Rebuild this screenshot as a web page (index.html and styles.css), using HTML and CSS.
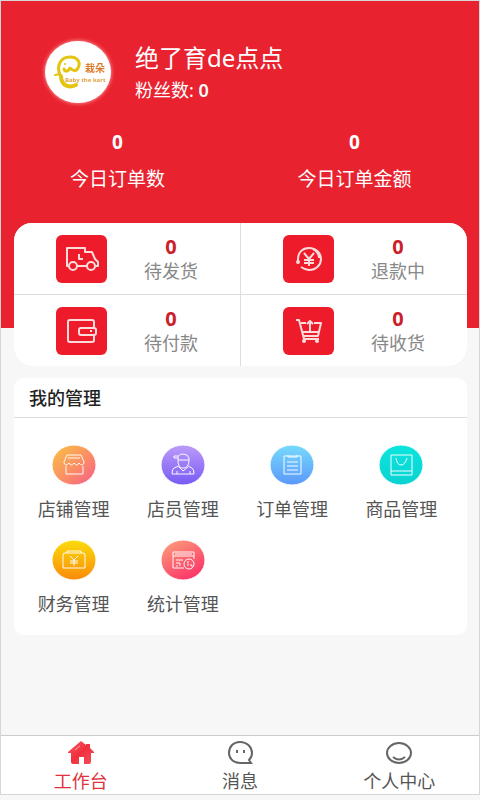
FILE: index.html
```html
<!DOCTYPE html>
<html lang="zh-CN">
<head>
<meta charset="utf-8">
<meta name="viewport" content="width=device-width, initial-scale=1">
<title>工作台</title>
<link rel="stylesheet" href="styles.css">
</head>
<body>
<div class="app">
  <header class="hero">
    <div class="profile">
      <svg class="avatar" viewBox="0 0 70 66" role="img" aria-label="店铺头像">
        <ellipse cx="35" cy="33" rx="33" ry="31" fill="#fff"/>
        <g fill="none" stroke="#e3c410" stroke-linecap="round" stroke-linejoin="round">
          <path stroke-width="2" d="M12 36l5-1"/>
          <path stroke-width="3" d="M17 36c-4-10 1-18 10-18 8 0 11 6 8 11-2 4-5 3-8 0-2 4-5 4-6 1"/>
          <path stroke-width="4" d="M18 37c0 8 6 13 15 9"/>
        </g>
        <circle cx="22" cy="25" r="1" fill="#e3c410"/>
        <text class="logo-name" x="42" y="33">栽朵</text>
        <text class="logo-sub" x="22" y="43">Baby the kart</text>
      </svg>
      <div>
        <h1 class="name">绝了育de点点</h1>
        <p class="fans">粉丝数: <b>0</b></p>
      </div>
    </div>
    <div class="today">
      <div><b>0</b><span>今日订单数</span></div>
      <div><b>0</b><span>今日订单金额</span></div>
    </div>
  </header>

  <main>
    <section class="orders">
      <a class="order" href="#ship">
        <svg class="tile" viewBox="0 0 51 48"><path d="M12 31h-1V13h18v4h7l3 7 3 3v4h-2M21 31h10M23 19v5h4"/><circle cx="17" cy="31" r="4"/><circle cx="35" cy="31" r="4"/></svg>
        <span class="count"><b>0</b>待发货</span>
      </a>
      <a class="order" href="#refund">
        <svg class="tile" viewBox="0 0 51 48"><path d="M15 24c0-7 5-11 11-11 7 0 12 5 12 11s-5 11-12 11c-3 0-5-1-8-3M30 14c4 2 6 5 6 9M21 18l5 6 5-6M26 24v7M21 25h10M21 28h10"/><path d="M15 24v4"/><circle cx="15" cy="27" r="1"/></svg>
        <span class="count"><b>0</b>退款中</span>
      </a>
      <a class="order" href="#pay">
        <svg class="tile" viewBox="0 0 51 48"><path d="M38 20v-5q0-2-2-2H14q-2 0-2 2v18q0 2 2 2h22q2 0 2-2v-4"/><rect x="23" y="21" width="17" height="7" rx="2"/><path d="M34 24h2"/></svg>
        <span class="count"><b>0</b>待付款</span>
      </a>
      <a class="order" href="#receive">
        <svg class="tile" viewBox="0 0 51 48"><path d="M13 13h3l5 19h15M18 16h5M31 16h7l-3 13H20M27 24v-9M24 17l3-3 3 3M20 25h16"/><circle cx="21" cy="34" r="1"/><circle cx="34" cy="34" r="1"/></svg>
        <span class="count"><b>0</b>待收货</span>
      </a>
    </section>

    <section class="manage">
      <h2>我的管理</h2>
      <div class="grid">
        <a href="#shop">
          <svg class="round" viewBox="0 0 44 42"><defs><linearGradient id="g1" x2="1" y2="1"><stop stop-color="#fbc342"/><stop offset=".55" stop-color="#fa8d65"/><stop offset="1" stop-color="#f75b8c"/></linearGradient></defs><ellipse cx="22" cy="21" rx="22" ry="20" fill="url(#g1)"/><path d="M15 11h14l3 7v1q-2 4-5 0-2 4-5 0-3 4-5 0-3 4-5 0v-1zM14 22v8h17v-8M16 14h12"/></svg>
          店铺管理</a>
        <a href="#staff">
          <svg class="round" viewBox="0 0 44 42"><defs><linearGradient id="g2" x2="0" y2="1"><stop stop-color="#bd9bfa"/><stop offset="1" stop-color="#775af4"/></linearGradient></defs><ellipse cx="22" cy="21" rx="22" ry="20" fill="url(#g2)"/><path d="M17 16v-2q0-4 5-4t6 4v2zM17 12h-4v2h4M17 16c0 6 2 8 5 8s6-2 6-8M18 22l-5 2q-2 1-2 6h22q0-5-2-6l-4-2M18 23l4 4 5-4M16 27v3M29 27v3"/></svg>
          店员管理</a>
        <a href="#orders">
          <svg class="round" viewBox="0 0 44 42"><defs><linearGradient id="g3" x2="0" y2="1"><stop stop-color="#76dafb"/><stop offset="1" stop-color="#5b98fb"/></linearGradient></defs><ellipse cx="22" cy="21" rx="22" ry="20" fill="url(#g3)"/><path d="M14 12h17v18H14zM18 11v2h9v-2M17 18h11M17 22h11M17 26h11"/></svg>
          订单管理</a>
        <a href="#goods">
          <svg class="round" viewBox="0 0 44 42"><defs><linearGradient id="g4" x2="0" y2="1"><stop stop-color="#0ce5dd"/><stop offset="1" stop-color="#0bd2d2"/></linearGradient></defs><ellipse cx="22" cy="21" rx="22" ry="20" fill="url(#g4)"/><path d="M12 11h21v20H12zM12 27h21M17 14q1 7 5 7t6-7"/></svg>
          商品管理</a>
        <a href="#finance">
          <svg class="round" viewBox="0 0 44 42"><defs><linearGradient id="g5" x2="0" y2="1"><stop stop-color="#fbdc0b"/><stop offset="1" stop-color="#fa8a0a"/></linearGradient></defs><ellipse cx="22" cy="21" rx="22" ry="20" fill="url(#g5)"/><path d="M13 14h18q2 0 2 2v13H11V16q0-2 2-2zM15 14v-2h14v2M18 17l4 4 4-4M22 21v6M18 22h8M18 24h8"/></svg>
          财务管理</a>
        <a href="#stats">
          <svg class="round" viewBox="0 0 44 42"><defs><linearGradient id="g6" x2=".6" y2="1"><stop stop-color="#fba57b"/><stop offset="1" stop-color="#fb3769"/></linearGradient></defs><ellipse cx="22" cy="21" rx="22" ry="20" fill="url(#g6)"/><path d="M23 29H12V13h21v7M12 17h21M14 15h17M15 21h7M15 24h4M15 27h2M19 24v3"/><circle cx="28" cy="25" r="5"/><path d="M27 22v5M30 25v2h2"/></svg>
          统计管理</a>
      </div>
    </section>
  </main>

  <nav class="tabs">
    <a class="active" href="#work">
      <svg viewBox="0 0 28 24"><defs><linearGradient id="g7" x2="1" y2="1"><stop stop-color="#fa5a62"/><stop offset=".5" stop-color="#f0303f"/><stop offset="1" stop-color="#f4505a"/></linearGradient></defs><path fill="url(#g7)" d="M14 0l5 4V3h4v4l4 4v1h-3v9q0 2-2 2h-5v-7h-5v7H6q-2 0-2-2v-9H1v-1z"/><path d="M8 9l5-4" stroke="#ffa4a4"/></svg>
      工作台</a>
    <a href="#message">
      <svg class="line" viewBox="0 0 28 24"><path d="M25 22H14C7 22 3 17 3 12 3 6 7 1 14 1s12 5 12 11c0 3-1 5-3 7zM11 9v3M18 9v3"/></svg>
      消息</a>
    <a href="#me">
      <svg class="line" viewBox="0 0 28 24"><ellipse cx="14" cy="12" rx="12" ry="10"/><path d="M8 16q6 5 12 0"/></svg>
      个人中心</a>
  </nav>
</div>
</body>
</html>
```
FILE: styles.css
```css
* { box-sizing: border-box; }

body {
  margin: 0;
  background: #f7f7f7;
  font-family: "Noto Sans", "Noto Sans CJK SC", sans-serif;
  font-size: 18px;
  line-height: 24px;
  color: #555;
}

h1, h2, p { margin: 0; }
a { color: inherit; text-decoration: none; }
svg { display: block; fill: none; }

.app {
  display: flex;
  flex-direction: column;
  min-height: calc(100vh - 5px);
  border: 1px solid #d6d6d6;
}

.hero {
  padding: 38px 0 136px;
  background: #e9222f;
  color: #fff;
}

.profile {
  display: flex;
  align-items: center;
  gap: 22px;
  padding-left: 42px;
}

.avatar {
  width: 70px;
  height: 66px;
  filter: drop-shadow(0 0 2px #ffb0b0);
}
.logo-name { font-size: 10px; font-weight: 700; fill: #dc7a2c; }
.logo-sub { font-size: 6px; font-weight: 700; fill: #e0a040; }

.name {
  font-size: 24px;
  font-weight: 400;
  line-height: 36px;
}
.fans { line-height: 28px; }
.fans b { font-weight: 600; }

.today {
  display: grid;
  grid-template-columns: 1fr 1fr;
  gap: 4px;
  margin-top: 25px;
  padding-right: 8px;
  text-align: center;
  font-size: 19px;
}
.today b, .today span { display: block; }
.today b { line-height: 24px; }
.today span { margin-top: 12px; line-height: 26px; }

main {
  flex: 1;
  margin: -105px 12px 0 13px;
}

.orders {
  display: grid;
  grid-template-columns: 1fr 1fr;
  gap: 1px;
  overflow: hidden;
  border-radius: 18px;
  background: #ddd;
}
.order {
  display: flex;
  align-items: center;
  gap: 37px;
  height: 71px;
  padding-left: 42px;
  background: #fff;
  color: #888;
}
.tile {
  width: 51px;
  height: 48px;
  border-radius: 6px;
  background: #ee1c2a;
  stroke: #ffdcdc;
  stroke-width: 2;
  stroke-linejoin: round;
}
.count { text-align: center; }
.count b {
  display: block;
  color: #cc1f2c;
  font-size: 20px;
}

.manage {
  margin-top: 12px;
  padding-bottom: 17px;
  border-radius: 10px;
  background: #fff;
}
.manage h2 {
  padding: 8px 15px 7px;
  border-bottom: 1px solid #ddd;
  color: #222;
  font-size: 18px;
  font-weight: 500;
}
.grid {
  display: grid;
  grid-template-columns: repeat(4, 1fr);
  row-gap: 16px;
  padding: 26px 11px 0 5px;
  text-align: center;
}
.round {
  width: 44px;
  height: 42px;
  margin: 0 auto 11px;
  stroke: #fffffff0;
  stroke-width: 1;
}
.grid a { height: 79px; }

.tabs {
  display: grid;
  grid-template-columns: repeat(3, 1fr);
  padding: 5px 0 1px;
  border-top: 1px solid #ccc;
  background: #fff;
  text-align: center;
}
.tabs svg {
  width: 28px;
  height: 24px;
  margin: 0 auto 4px;
}
.line { stroke: #666; stroke-width: 2; }
.active { color: #e0313c; }
```
